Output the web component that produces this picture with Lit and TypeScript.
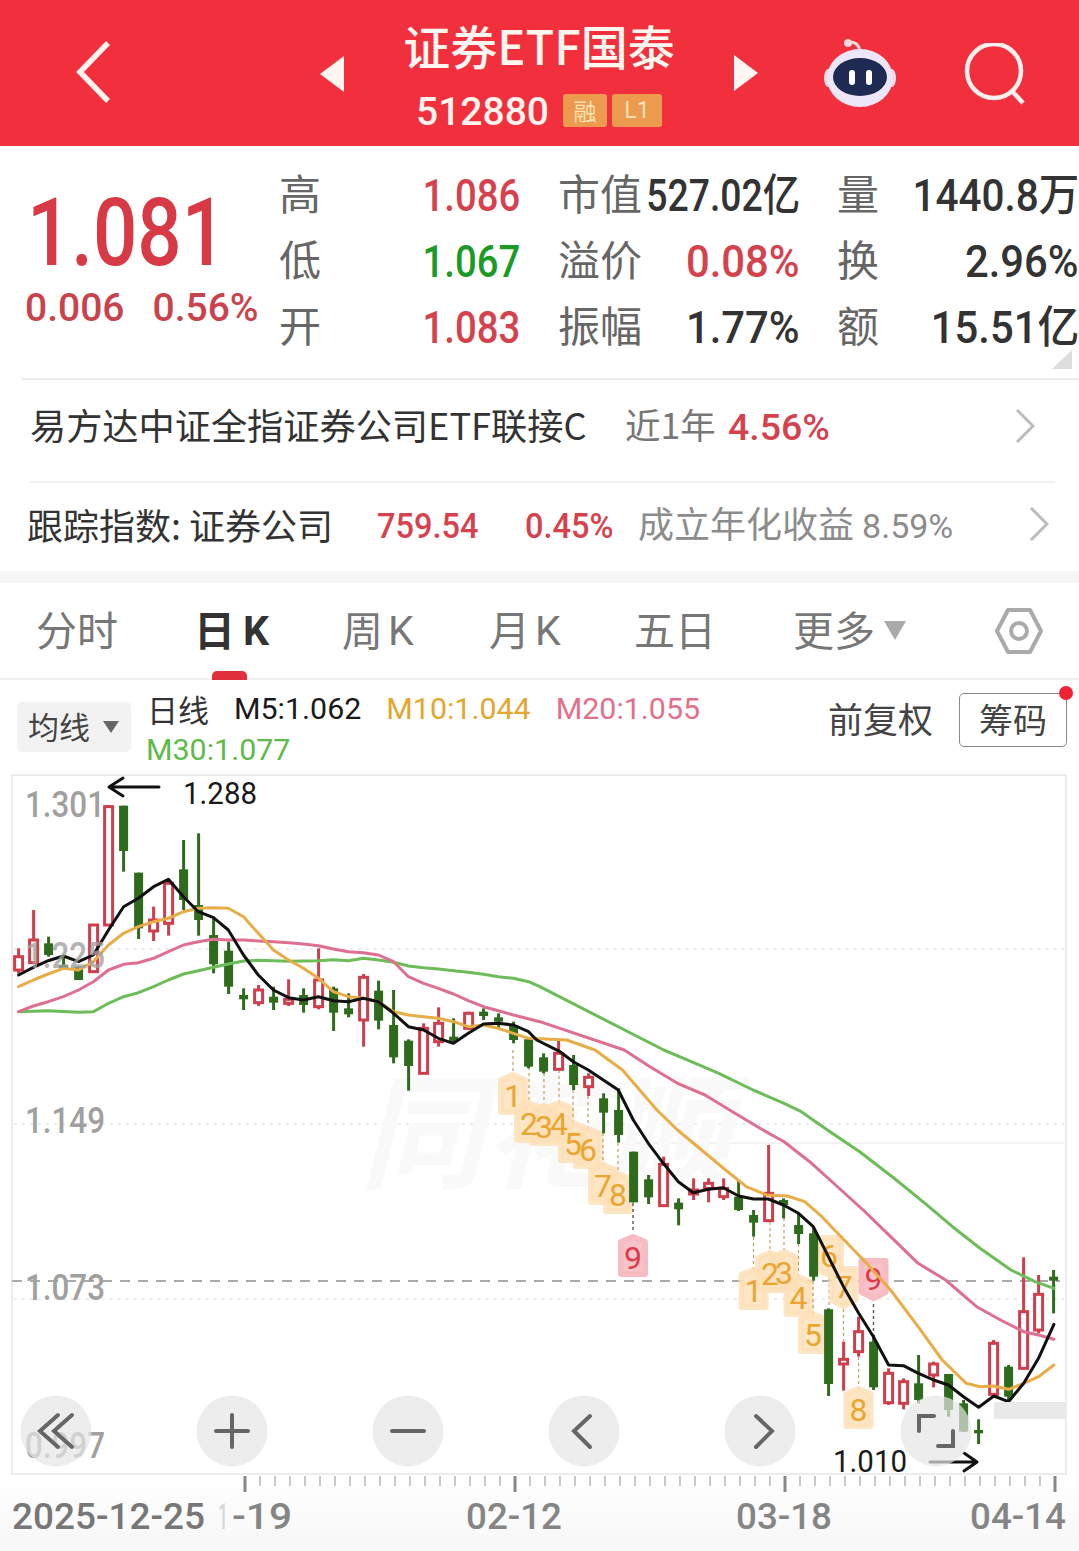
import { LitElement, html, svg, css } from "lit";
import { customElement } from "lit/decorators.js";

type C = [number, number, number, number, number]; // up(1)/down(0), wickTop, bodyTop, bodyBottom, wickBottom

const A: C[] = [
  [1,535,560,600,610],[1,420,510,578,580],[0,500,520,555,560],[0,555,585,600,600],[0,590,590,630,630],
  [1,465,465,605,605],[1,105,110,465,465],[0,107,107,243,305],[0,308,308,475,507],[1,410,450,483,513],
  [1,330,340,460,497],[0,210,298,390,420],[0,190,405,450,497],[0,440,495,583,610],[0,515,542,650,672],
  [0,655,675,688,720],[1,645,660,698,708],[0,650,680,698,720],[1,628,688,700,708],[0,655,675,705,728],
  [1,535,630,710,718],[0,650,655,728,783],[0,670,715,733,742],[1,612,622,750,830],[0,632,662,752,778],
  [0,660,765,862,880],[0,808,812,888,962],[1,760,775,910,912],[1,712,760,815,830],[0,745,800,815,820],
  [1,725,730,775,780],[0,715,725,738,750],[0,730,742,755,778],[0,755,765,810,820],[0,805,808,890,895],
];
const B: C[] = [
  [0,40,52,95,100],[1,0,40,88,90],[0,45,75,135,150],[1,100,112,140,168],[0,160,175,218,280],
  [0,145,210,285,308],[0,335,335,487,487],[0,405,418,472,492],[1,350,373,497,500],[0,475,488,508,556],
  [1,415,450,462,480],[1,415,430,445,487],
];
const D: C[] = [
  [1,385,415,440,450],[0,392,440,480,483],[0,480,495,518,560],[1,285,430,512,515],[0,445,450,465,505],
  [0,490,525,552,582],[0,530,550,680,692],[0,775,778,1002,1038],[1,875,928,942,1022],[1,800,845,905,920],
  [0,855,875,1012,1020],[1,955,970,1058,1065],[1,985,995,1060,1078],[0,915,1000,1050,1060],[1,935,942,975,1012],
  [0,972,972,1080,1100],[0,1050,1060,1145,1145],[0,1108,1140,1150,1182],[1,870,880,1033,1035],[0,945,950,1040,1050],
  [1,622,785,955,958],[1,675,733,840,850],[0,660,680,692,790],
];
const conv = (l: C[], o: number): C[] =>
  l.map(([u, a, b, c, d]) => [u, o + a / 3, o + b / 3, o + c / 3, o + d / 3] as C);
const candles: C[] = [...conv(A, 770), ...conv(B, 1040), ...conv(D, 1050)];
const X = (i: number) => 18.6 + 15 * i;

type P = [number, number];
const z2 = (l: P[]): P[] => l.map(([x, y]) => [x / 2.904, 770 + y / 3]);
const z7 = (l: P[]): P[] => l.map(([x, y]) => [400 + x / 3, 1040 + y / 3]);
const z3 = (l: P[]): P[] => l.map(([x, y]) => [540 + x / 2.909, 1050 + y / 3]);
const str = (l: P[]) => l.map(([x, y]) => `${x.toFixed(1)},${y.toFixed(1)}`).join(" ");

const m5 = str([
  ...z2([[54,615],[97,592],[140,572],[184,558],[228,575],[271,555],[315,480],[359,410],[402,385],[446,350],[489,328],[533,380],[576,425],[620,443],[663,480],[707,555],[750,615],[794,660],[838,683],[881,690],[925,680],[968,692],[1012,695],[1055,685],[1099,695],[1143,730],[1186,770],[1230,780],[1273,805],[1317,820],[1360,790],[1404,762],[1447,760],[1491,765],[1535,785]]),
  ...z7([[410,0],[480,35],[520,65],[565,90],[610,120],[655,150],[700,240],[745,310],[790,370],[835,425],[880,458],[925,448],[970,443]]),
  ...z3([[578,438],[621,447],[664,447],[708,465],[752,490],[795,530],[839,620],[883,710],[927,790],[970,860],[1014,945],[1057,947],[1101,970],[1145,990],[1188,1005],[1232,1040],[1276,1072],[1320,1038],[1363,1055],[1407,1000],[1450,925],[1495,823]]),
]);
const m10 = str([
  ...z2([[54,650],[97,630],[140,612],[184,595],[228,600],[271,575],[315,525],[359,490],[402,470],[446,455],[489,445],[533,425],[576,415],[620,413],[663,415],[707,440],[750,490],[794,540],[838,570],[881,595],[925,625],[968,665],[1012,680],[1055,685],[1099,695],[1143,725],[1186,735],[1230,740],[1273,745],[1317,755],[1360,770],[1404,765],[1447,775],[1491,790],[1535,805]]),
  ...z7([[500,0]]),
  ...z3([[160,0],[240,60],[290,120],[340,180],[400,240],[470,300],[540,360],[600,410],[660,435],[720,438],[770,455],[820,500],[880,565],[950,640],[1020,720],[1100,830],[1170,930],[1240,1000],[1280,1010],[1320,1008],[1363,1018],[1407,1000],[1450,980],[1495,945]]),
]);
const m20 = str([
  ...z2([[54,725],[97,708],[140,695],[184,680],[228,660],[271,635],[315,600],[359,583],[402,578],[446,565],[489,545],[533,525],[576,515],[620,508],[663,510],[707,510],[750,513],[794,515],[838,518],[881,522],[925,527],[968,537],[1012,545],[1055,548],[1099,555],[1143,575],[1186,620],[1230,640],[1273,655],[1317,672],[1360,692],[1404,710],[1447,722],[1491,735],[1568,755]]),
  ...z3([[245,0],[320,50],[400,100],[480,135],[560,185],[640,235],[710,275],[790,340],[860,405],[940,480],[1020,560],[1100,640],[1180,690],[1270,770],[1340,810],[1407,845],[1450,855],[1495,868]]),
]);
const m30 = str([
  ...z2([[54,725],[140,722],[228,727],[271,725],[315,700],[359,680],[402,668],[446,650],[489,630],[533,612],[576,602],[620,592],[663,582],[707,573],[750,571],[838,574],[925,572],[968,569],[1012,572],[1055,565],[1099,570],[1143,577],[1186,588],[1230,593],[1273,597],[1317,602],[1360,607],[1404,613],[1447,620],[1491,625],[1535,635],[1568,650]]),
  ...z3([[360,0],[440,35],[520,70],[620,120],[710,160],[760,185],[850,250],[930,305],[1030,385],[1120,460],[1200,530],[1280,595],[1370,660],[1440,695],[1495,715]]),
]);

// label, centre x, centre y, red?, points down?, dash from y, to y
const badges: [string, number, number, boolean, boolean, number, number][] = [
  ["1",513,1095,false,false,1050,1075],["2",529,1123,false,false,1067,1103],["3",544,1126,false,false,1073,1106],
  ["4",559,1123,false,false,1070,1103],["5",573,1143,false,false,1090,1123],["6",588,1149,false,false,1096,1129],
  ["7",603,1185,false,false,1133,1165],["8",618,1194,false,false,1143,1174],["9",633,1257,true,false,1203,1233],
  ["1",753.5,1290,false,false,1237,1270],["2",770,1273,false,false,1222,1253],["3",784,1272,false,false,1218,1252],
  ["4",798.5,1297,false,false,1244,1277],["5",813,1334,false,false,1281,1314],["6",829,1255,false,true,1272,1308],
  ["7",843.5,1286,false,true,1303,1341],["8",858.6,1409,false,false,1357,1389],["9",873.5,1278,true,true,1298,1335],
];

const ticks: number[] = [];
for (let x = 245; x <= 1055; x += 15) ticks.push(x);

@customElement("app-root")
export class AppRoot extends LitElement {
  static styles = css`
    :host { display: block; width: 1079px; height: 1551px; overflow: hidden; background: #fff;
      font-family: "Noto Sans CJK SC", Roboto, sans-serif; color: #333; }
    * { box-sizing: border-box; }
    .num { font-family: Roboto, "Noto Sans CJK SC", sans-serif; font-weight: 500; }
    .header { height: 146px; background: #f22f3c; display: flex; align-items: center; padding-left: 76px; color: #fff; }
    .header svg { display: block; flex: none; }
    .back { margin-top: -2px; }
    .tri-l { margin-left: 210px; margin-top: 1px; }
    .center { width: 390px; height: 146px; display: flex; flex-direction: column; align-items: center; }
    .title { font-size: 47px; line-height: 50px; margin-top: 20px; font-weight: 500; color: #fff6f0; white-space: nowrap; }
    .code-row { display: flex; align-items: center; margin-top: 23px; gap: 5px; height: 34px; }
    .code { font-size: 39px; line-height: 34px; margin-top: 4px; margin-right: 9px; color: #fff3ee; font-family: Roboto, sans-serif; font-weight: 500; }
    .tag { height: 33px; background: #ec9a4e; border-radius: 3px; display: flex; align-items: center; justify-content: center; color: #fde3b4; font-size: 23px; line-height: 33px; }
    .t1 { width: 44px; } .t2 { width: 50px; font-family: Roboto, sans-serif; }
    .robot { margin-left: 65px; margin-top: 2px; }
    .search { margin-left: 67px; margin-top: 1px; }

    .quote { height: 232px; padding-top: 15px; display: grid;
      grid-template-columns: 280px 40px 200px 39px 89px 152px 38px 42px 199px;
      grid-template-rows: 66px 66px 66px; align-items: center; position: relative; white-space: nowrap; }
    .left { grid-row: 1 / 4; grid-column: 1; align-self: start; padding: 27px 0 0 25px; }
    .price { font-size: 94px; line-height: 90px; color: #d83a45; transform: scaleX(.83); transform-origin: left; margin-left: 2px; height: 90px; }
    .sub { display: flex; gap: 28px; font-size: 39px; line-height: 44px; color: #c9434d; margin-top: 8px; }
    .sub span { display: block; }
    .lab { font-size: 42px; line-height: 50px; color: #666; margin: -4px 0 0 -1px; }
    .val { font-size: 44px; line-height: 50px; display: flex; justify-content: flex-end; margin-top: 4px; }
    .val span { display: block; flex: none; transform: scaleX(.87); transform-origin: right; }
    .val .w { transform: scaleX(.95); }
    .val .n { transform: scaleX(.85); }
    .val .m { transform: scaleX(.92); }
    .up { color: #d5424e; } .dn { color: #1c9a28; } .dk { color: #333; }
    .corner { position: absolute; right: 7px; bottom: 9px; width: 0; height: 0; border-left: 20px solid transparent; border-bottom: 19px solid #ddd; }

    .row { display: flex; align-items: center; white-space: nowrap; position: relative; }
    .r1 { height: 103px; margin-left: 22px; padding: 0 0 14px 8px; border-top: 2px solid #ebebeb; }
    .r2 { height: 88px; padding: 0 0 6px 27px; }
    .sep { height: 2px; background: #f1f1f1; margin: 0 24px 0 30px; }
    .fund { width: 595px; font-size: 36.2px; line-height: 44px; color: #333; }
    .near { width: 103px; font-size: 35.5px; color: #777; line-height: 44px; }
    .pct { font-size: 37.5px; line-height: 44px; width: 260px; color: #d5424e; margin-top: 6px; }
    .track { width: 350px; font-size: 36px; line-height: 44px; color: #333; }
    .idx { width: 148px; font-size: 35px; line-height: 44px; color: #d5424e; margin-top: 6px; }
    .idx span { display: inline-block; transform: scaleX(.93); transform-origin: left; }
    .idx2 { width: 113px; }
    .est { width: 391px; font-size: 36px; color: #8c8c8c; line-height: 44px; }
    .est span { font-family: Roboto, sans-serif; font-size: 34px; }
    .chev { flex: none; }
    .chev1 { position: absolute; left: 993px; margin-top: 4px; }
    .chev2 { position: absolute; left: 1029px; }
    .band { height: 12px; background: #f5f5f5; }

    .tabs { height: 97px; display: grid; padding-left: 36px; border-bottom: 2px solid #efefef; position: relative;
      grid-template-columns: 159px 147px 147px 145px 159px 202px 48px; align-items: center; white-space: nowrap; font-size: 41px; color: #777; }
    .tab { line-height: 50px; display: flex; align-items: center; height: 50px; margin-top: -5px; }
    .tab i { font-style: normal; font-family: Roboto, sans-serif; font-size: 41px; margin: 6px 0 0 5px; font-weight: 400; }
    .on { color: #333; font-weight: 700; margin-left: -1px; }
    .on i { font-weight: 700; margin-left: 8px; }
    .bar { position: absolute; left: 212px; bottom: -2px; width: 35px; height: 9px; background: #e0303c; border-radius: 5px 5px 0 0; }
    .more { display: flex; align-items: center; }
    .caret { width: 0; height: 0; border-left: 11px solid transparent; border-right: 11px solid transparent; border-top: 19px solid #aaa; margin: 4px 0 0 9px; }

    .legend { height: 94px; display: flex; padding-left: 17px; position: relative; white-space: nowrap; }
    .ma { width: 114px; height: 50px; margin-top: 22px; background: #f2f2f2; border-radius: 5px; display: flex; align-items: center; padding: 0 0 4px 11px; font-size: 31px; color: #444; flex: none; }
    .ma b { width: 0; height: 0; border-left: 8px solid transparent; border-right: 8px solid transparent; border-top: 12px solid #666; margin: 4px 0 0 13px; }
    .lines { width: 682px; margin-left: 15px; font-family: Roboto, sans-serif; font-size: 30.4px; line-height: 41px; padding-top: 8px; display: flex; flex-wrap: wrap; align-content: flex-start; column-gap: 25px; }
    .lines .cn { font-family: "Noto Sans CJK SC", sans-serif; font-size: 31px; color: #333; margin-left: 1px; }
    .m5 { color: #1a1a1a; } .m10 { color: #e3a62e; } .m20 { color: #e36f8b; } .m30 { color: #5fb94b; }
    .fq { font-size: 35px; color: #444; line-height: 44px; margin-top: 16px; width: 131px; flex: none; }
    .btn { width: 108px; height: 54px; margin-top: 13px; border: 1.5px solid #8a8a8a; border-radius: 5px; font-size: 34px; padding-bottom: 4px; display: flex; align-items: center; justify-content: center; color: #444; flex: none; }
    .dot { position: absolute; left: 1059px; top: 6px; width: 14px; height: 14px; background: #ee2233; border-radius: 50%; }

    .chart { display: block; width: 1079px; height: 777px; }
    .box { fill: none; stroke: #ececec; stroke-width: 2; }
    .grid { stroke: #e6e6e6; stroke-width: 1.5; stroke-dasharray: 3 5; }
    .solid { stroke: #eee; stroke-width: 1.5; }
    .pr { stroke: #aaa; stroke-width: 2; stroke-dasharray: 10 8; }
    .wm { font-family: "Noto Sans CJK SC", sans-serif; font-size: 124px; font-weight: 700; fill: #f9f9f9; font-style: italic; }
    .wick-u { stroke: #cf3e4c; stroke-width: 3; }
    .wick-d { stroke: #2f6b1d; stroke-width: 3; }
    .body-u { fill: #fff; stroke: #cf3e4c; stroke-width: 3; }
    .body-d { fill: #2f6b1d; }
    .ln { fill: none; stroke-width: 3; stroke-linejoin: round; stroke-linecap: round; }
    .l5 { stroke: #111; } .l10 { stroke: #e9ad48; } .l20 { stroke: #de6f90; } .l30 { stroke: #6cbd58; }
    .bd { fill: #fde0b6; fill-opacity: .8; stroke: #fde0b6; stroke-opacity: .8; stroke-width: 6; stroke-linejoin: round; }
    .bd-r { fill: #f7bcc3; fill-opacity: .9; stroke: #f7bcc3; stroke-width: 6; stroke-linejoin: round; }
    .bt { font-family: Roboto, sans-serif; font-size: 32px; fill: #eba52f; text-anchor: middle; }
    .bt-r { fill: #dd3a4a; }
    .dash { stroke: #b9a15e; stroke-width: 1.2; stroke-dasharray: 3 3; }
    .dash-r { stroke: #555; stroke-width: 1.4; stroke-dasharray: 3 3; }
    .axis { font-family: Roboto, sans-serif; font-size: 36px; fill: #a0a0a0; font-weight: 500; }
    .axis-o { fill-opacity: .8; }
    .note { font-family: Roboto, sans-serif; font-size: 32px; fill: #1a1a1a; }
    .arrow { fill: none; stroke: #111; stroke-width: 3; stroke-linecap: round; stroke-linejoin: round; }
    .pad { fill: #e6e6e6; fill-opacity: .7; }
    .ic { fill: none; stroke: #666; stroke-width: 4; stroke-linecap: round; stroke-linejoin: miter; }
    .blk { fill: #e9e9e9; }
    .tk { stroke: #c8c8c8; stroke-width: 2; }
    .tk-m { stroke: #888; stroke-width: 3; }
    .xl { font-family: Roboto, sans-serif; font-size: 36px; fill: #858585; font-weight: 500; }
    .xl-d { fill: #777; }
    .xl-f { fill: #d8d8d8; }
  `;

  private tx(x: number, y: number, s: string, w: number, cls: string) {
    return svg`<text x=${x} y=${y} textLength=${w} lengthAdjust="spacingAndGlyphs" class=${cls}>${s}</text>`;
  }

  private chart() {
    const pad = [56, 232, 408, 584, 760, 936];
    return html`<svg class="chart" viewBox="0 774 1079 777">
      <defs>
        <linearGradient id="bot" x1="0" y1="0" x2="0" y2="1">
          <stop offset="0" stop-color="#fff"></stop><stop offset="1" stop-color="#f7f7f7"></stop>
        </linearGradient>
      </defs>
      <rect x="0" y="1474" width="1079" height="77" fill="url(#bot)"></rect>
      <rect class="box" x="12" y="775" width="1054" height="699"></rect>
      <line class="grid" x1="14" y1="949" x2="1064" y2="949"></line>
      <line class="grid" x1="14" y1="1124" x2="1064" y2="1124"></line>
      <line class="solid" x1="635" y1="1143" x2="1064" y2="1143"></line>
      <line class="grid" x1="14" y1="1299" x2="1064" y2="1299"></line>
      ${this.tx(360, 1178, "同花顺", 370, "wm")}
      <line class="pr" x1="12" y1="1281" x2="1060" y2="1281"></line>
      ${badges.map(([l, cx, cy, red, down, d1, d2]) => {
        const top = cy - 17, bot = cy + 17, hw = 12;
        const path = down
          ? `M${cx - hw} ${top}H${cx + hw}V${bot - 3}L${cx} ${bot + 3}L${cx - hw} ${bot - 3}Z`
          : `M${cx - hw} ${top + 2}L${cx} ${top - 3}L${cx + hw} ${top + 2}V${bot}H${cx - hw}Z`;
        return svg`<line class=${red ? "dash-r" : "dash"} x1=${cx} y1=${d1} x2=${cx} y2=${d2}></line>
          <path class=${red ? "bd-r" : "bd"} d=${path}></path>`;
      })}
      ${candles.map(([u, wt, bt, bb, wb], i) => {
        const x = X(i);
        return svg`<line class=${u ? "wick-u" : "wick-d"} x1=${x} x2=${x} y1=${wt} y2=${wb}></line>
          ${u
            ? svg`<rect class="body-u" x=${x - 4} y=${bt} width="8" height=${Math.max(bb - bt, 3)}></rect>`
            : svg`<rect class="body-d" x=${x - 4.5} y=${bt} width="9" height=${Math.max(bb - bt, 3)}></rect>`}`;
      })}
      ${badges.map(([l, cx, cy, red]) =>
        svg`<text class=${red ? "bt bt-r" : "bt"} x=${cx} y=${cy + 12}>${l}</text>`)}
      <polyline class="ln l30" points=${m30}></polyline>
      <polyline class="ln l20" points=${m20}></polyline>
      <polyline class="ln l10" points=${m10}></polyline>
      <polyline class="ln l5" points=${m5}></polyline>
      <rect class="blk" x="994" y="1402" width="72" height="17"></rect>
      ${this.tx(25, 817, "1.301", 80, "axis")}
      ${this.tx(25, 968, "1.225", 80, "axis axis-o")}
      ${this.tx(25, 1133, "1.149", 80, "axis")}
      ${this.tx(25, 1300, "1.073", 80, "axis")}
      ${this.tx(25, 1458, "0.997", 80, "axis")}
      ${this.tx(183, 804, "1.288", 74, "note")}
      ${this.tx(833, 1472, "1.010", 74, "note")}
      <path class="arrow" d="M159 787H109M123 778L109 787L123 796"></path>
      <path class="arrow" d="M930 1462H977M964 1453L977 1462L964 1471"></path>
      ${pad.map((x) => svg`<circle class="pad" cx=${x} cy="1431" r="35.5"></circle>`)}
      <path class="ic" d="M58 1415L40 1431L58 1447M72 1447L54 1431L72 1415"></path>
      <path class="ic" d="M232 1415V1447M216 1431H248"></path>
      <path class="ic" d="M392 1431H424"></path>
      <path class="ic" d="M590 1416L574 1431L590 1447"></path>
      <path class="ic" d="M756 1416L772 1431L756 1447"></path>
      <path class="ic" d="M919 1431V1416H934M953 1431V1446H938"></path>
      ${ticks.map((x) => {
        const major = (x - 245) % 270 === 0;
        return svg`<line class=${major ? "tk-m" : "tk"} x1=${x} x2=${x} y1="1476" y2=${major ? 1492 : 1486}></line>`;
      })}
      ${this.tx(12, 1529, "2025-12-25", 193, "xl xl-d")}
      ${this.tx(218, 1529, "1", 10, "xl xl-f")}
      ${this.tx(232, 1529, "-19", 60, "xl")}
      ${this.tx(466, 1529, "02-12", 96, "xl")}
      ${this.tx(736, 1529, "03-18", 96, "xl")}
      ${this.tx(970, 1529, "04-14", 96, "xl")}
    </svg>`;
  }

  render() {
    return html`
      <div class="header">
        <svg class="back" width="34" height="64" viewBox="0 0 34 64"><path d="M32 3L4 32L32 61" fill="none" stroke="#fff3ee" stroke-width="5.5"></path></svg>
        <svg class="tri-l" width="24" height="36" viewBox="0 0 24 36"><path d="M24 0V36L0 18Z" fill="#fff6f2"></path></svg>
        <div class="center">
          <div class="title">证券ETF国泰</div>
          <div class="code-row">
            <span class="code">512880</span>
            <span class="tag t1">融</span>
            <span class="tag t2">L1</span>
          </div>
        </div>
        <svg width="24" height="36" viewBox="0 0 24 36"><path d="M0 0V36L24 18Z" fill="#fff6f2"></path></svg>
        <svg class="robot" width="74" height="70" viewBox="0 0 74 70">
          <path d="M37 12C36 6 32 3 27 3" fill="none" stroke="#f6d8df" stroke-width="3"></path>
          <circle cx="25" cy="4" r="4" fill="#f6d8df"></circle>
          <ellipse cx="5" cy="39" rx="4" ry="9" fill="#eed9ea"></ellipse>
          <ellipse cx="69" cy="39" rx="4" ry="9" fill="#eed9ea"></ellipse>
          <ellipse cx="37" cy="39" rx="33" ry="29" fill="#ece6f8"></ellipse>
          <ellipse cx="37" cy="38" rx="27" ry="19" fill="#1f2a52"></ellipse>
          <rect x="26" y="31" width="6" height="15" rx="3" fill="#fff"></rect>
          <rect x="43" y="31" width="6" height="15" rx="3" fill="#fff"></rect>
        </svg>
        <svg class="search" width="62" height="62" viewBox="0 0 62 62">
          <circle cx="30" cy="28" r="27" fill="none" stroke="#fff0ee" stroke-width="4.5"></circle>
          <path d="M48 48L59 60" stroke="#fff0ee" stroke-width="4.5"></path>
        </svg>
      </div>

      <div class="quote">
        <div class="left">
          <div class="price num">1.081</div>
          <div class="sub num"><span>0.006</span><span>0.56%</span></div>
        </div>
        <div class="lab" style="grid-area:1/2">高</div>
        <div class="val num up" style="grid-area:1/3"><span>1.086</span></div>
        <div class="lab" style="grid-area:1/5">市值</div>
        <div class="val num dk" style="grid-area:1/6"><span class="n">527.02亿</span></div>
        <div class="lab" style="grid-area:1/8">量</div>
        <div class="val num dk" style="grid-area:1/9"><span class="m">1440.8万</span></div>

        <div class="lab" style="grid-area:2/2">低</div>
        <div class="val num dn" style="grid-area:2/3"><span>1.067</span></div>
        <div class="lab" style="grid-area:2/5">溢价</div>
        <div class="val num up" style="grid-area:2/6"><span class="w">0.08%</span></div>
        <div class="lab" style="grid-area:2/8">换</div>
        <div class="val num dk" style="grid-area:2/9"><span class="w">2.96%</span></div>

        <div class="lab" style="grid-area:3/2">开</div>
        <div class="val num up" style="grid-area:3/3"><span>1.083</span></div>
        <div class="lab" style="grid-area:3/5">振幅</div>
        <div class="val num dk" style="grid-area:3/6"><span class="w">1.77%</span></div>
        <div class="lab" style="grid-area:3/8">额</div>
        <div class="val num dk" style="grid-area:3/9"><span class="w">15.51亿</span></div>
        <div class="corner"></div>
      </div>

      <div class="row r1">
        <span class="fund">易方达中证全指证券公司ETF联接C</span>
        <span class="near">近1年</span>
        <span class="pct num">4.56%</span>
        <svg class="chev chev1" width="20" height="36" viewBox="0 0 20 36"><path d="M2 2L18 18L2 34" fill="none" stroke="#bbb" stroke-width="3"></path></svg>
      </div>
      <div class="sep"></div>
      <div class="row r2">
        <span class="track">跟踪指数: 证券公司</span>
        <span class="idx num"><span>759.54</span></span>
        <span class="idx idx2 num"><span>0.45%</span></span>
        <span class="est">成立年化收益 <span>8.59%</span></span>
        <svg class="chev chev2" width="20" height="36" viewBox="0 0 20 36"><path d="M2 2L18 18L2 34" fill="none" stroke="#bbb" stroke-width="3"></path></svg>
      </div>
      <div class="band"></div>

      <div class="tabs">
        <div class="tab">分时</div>
        <div class="tab on">日<i>K</i></div>
        <div class="tab">周<i>K</i></div>
        <div class="tab">月<i>K</i></div>
        <div class="tab">五日</div>
        <div class="tab more">更多<span class="caret"></span></div>
        <svg width="48" height="48" viewBox="0 0 48 48">
          <path d="M13 3H35L46 24L35 45H13L2 24Z" fill="none" stroke="#aaa" stroke-width="4" stroke-linejoin="round"></path>
          <circle cx="24" cy="24" r="8" fill="none" stroke="#aaa" stroke-width="4"></circle>
        </svg>
        <div class="bar"></div>
      </div>

      <div class="legend">
        <div class="ma">均线<b></b></div>
        <div class="lines">
          <span class="cn">日线</span>
          <span class="m5">M5:1.062</span>
          <span class="m10">M10:1.044</span>
          <span class="m20">M20:1.055</span>
          <span class="m30">M30:1.077</span>
        </div>
        <div class="fq">前复权</div>
        <div class="btn">筹码</div>
        <div class="dot"></div>
      </div>
      ${this.chart()}
    `;
  }
}
